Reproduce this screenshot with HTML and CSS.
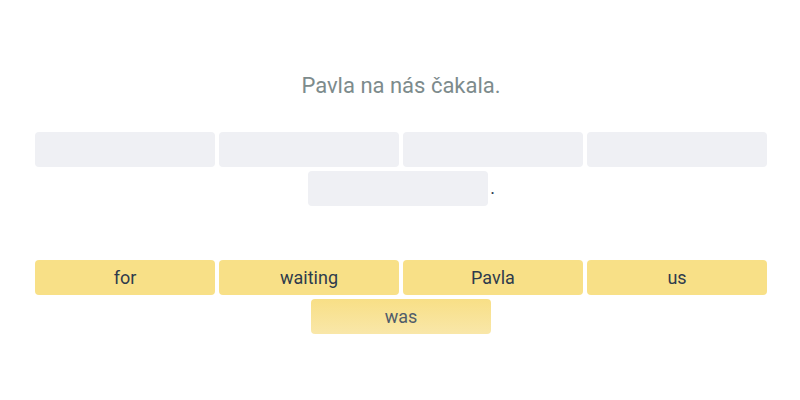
FILE: index.html
```html
<!DOCTYPE html>
<html>
<head>
<meta charset="utf-8">
<link rel="stylesheet" href="styles.css">
</head>
<body>
<div class="page">
  <div class="prompt">Pavla na nás čakala.</div>
  <div class="answer">
    <div class="blank"></div>
    <div class="blank"></div>
    <div class="blank"></div>
    <div class="blank"></div>
    <div class="blank"></div>
    <span class="punct">.</span>
  </div>
  <div class="bank">
    <div class="token">for</div>
    <div class="token">waiting</div>
    <div class="token">Pavla</div>
    <div class="token">us</div>
    <div class="token active">was</div>
  </div>
</div>
</body>
</html>
```

FILE: styles.css
```css
html, body {
  margin: 0;
  padding: 0;
  background: #ffffff;
}
body {
  font-family: Roboto, "Liberation Sans", sans-serif;
}
.page {
  width: 800px;
  height: 400px;
  display: flex;
  flex-direction: column;
  align-items: center;
}
.prompt {
  margin-top: 73px;
  padding-left: 2px;
  font-size: 22px;
  line-height: 26px;
  color: #7d8b8c;
}
.answer {
  margin-top: 33px;
  width: 740px;
  padding-left: 2px;
  display: flex;
  flex-wrap: wrap;
  justify-content: center;
  align-items: flex-end;
  gap: 4px;
}
.blank {
  width: 180px;
  height: 35px;
  border-radius: 4px;
  background: #eff0f4;
}
.blank:nth-child(5) {
  margin-left: 1px;
}
.punct {
  font-size: 18px;
  line-height: 21px;
  color: #2e3b4c;
  margin-left: -2px;
  margin-bottom: 8px;
}
.bank {
  margin-top: 54px;
  width: 740px;
  padding-left: 2px;
  display: flex;
  flex-wrap: wrap;
  justify-content: center;
  gap: 4px;
}
.token {
  width: 180px;
  height: 35px;
  border-radius: 4px;
  background: #f8e087;
  color: #2e3b4c;
  font-size: 18px;
  display: flex;
  align-items: center;
  justify-content: center;
}
.token.active {
  background: linear-gradient(#f8df86, #f9e7a9);
  color: #505c6a;
}
```
